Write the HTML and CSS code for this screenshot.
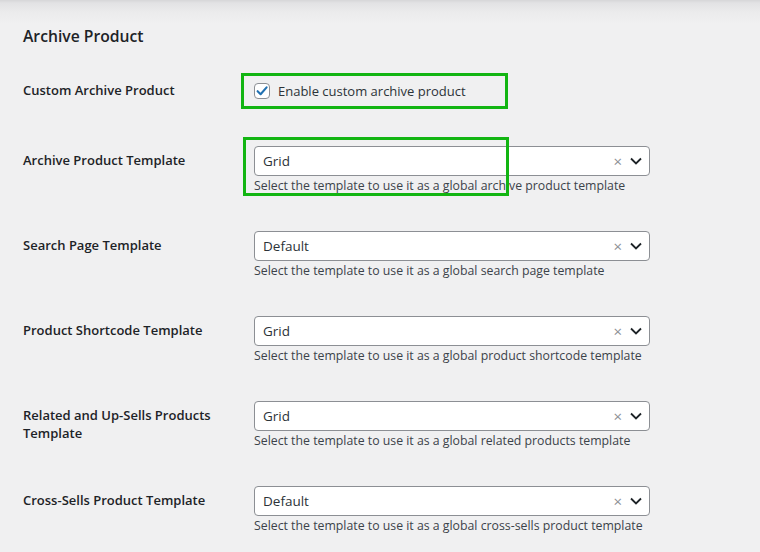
FILE: index.html
```html
<!DOCTYPE html>
<html lang="en">
<head>
<meta charset="utf-8">
<title>Archive Product</title>
<link rel="stylesheet" href="styles.css">
</head>
<body>
<div class="page">
  <h2 class="title">Archive Product</h2>
  <div class="form">
    <div class="row row-check">
      <div class="label">Custom Archive Product</div>
      <div class="field">
        <label class="check">
          <span class="box"><svg viewBox="0 0 16 16" width="16" height="16"><path d="M3.6 8.2 L6.6 11.2 L12.6 4.4" fill="none" stroke="#2271b1" stroke-width="2.1" stroke-linecap="round" stroke-linejoin="round"/></svg></span>
          <span>Enable custom archive product</span>
        </label>
        <span class="highlight hl-check"></span>
      </div>
    </div>

    <div class="row">
      <div class="label">Archive Product Template</div>
      <div class="field">
        <div class="select"><span class="value">Grid</span><span class="clear">×</span><svg class="chev" viewBox="0 0 12 8" width="12" height="8"><path d="M1 1.5 L6 6.5 L11 1.5" fill="none" stroke="#1d2327" stroke-width="1.8"/></svg></div>
        <p class="desc">Select the template to use it as a global archive product template</p>
        <span class="highlight hl-select"></span>
      </div>
    </div>

    <div class="row">
      <div class="label">Search Page Template</div>
      <div class="field">
        <div class="select"><span class="value">Default</span><span class="clear">×</span><svg class="chev" viewBox="0 0 12 8" width="12" height="8"><path d="M1 1.5 L6 6.5 L11 1.5" fill="none" stroke="#1d2327" stroke-width="1.8"/></svg></div>
        <p class="desc">Select the template to use it as a global search page template</p>
      </div>
    </div>

    <div class="row">
      <div class="label">Product Shortcode Template</div>
      <div class="field">
        <div class="select"><span class="value">Grid</span><span class="clear">×</span><svg class="chev" viewBox="0 0 12 8" width="12" height="8"><path d="M1 1.5 L6 6.5 L11 1.5" fill="none" stroke="#1d2327" stroke-width="1.8"/></svg></div>
        <p class="desc">Select the template to use it as a global product shortcode template</p>
      </div>
    </div>

    <div class="row">
      <div class="label">Related and Up-Sells Products Template</div>
      <div class="field">
        <div class="select"><span class="value">Grid</span><span class="clear">×</span><svg class="chev" viewBox="0 0 12 8" width="12" height="8"><path d="M1 1.5 L6 6.5 L11 1.5" fill="none" stroke="#1d2327" stroke-width="1.8"/></svg></div>
        <p class="desc">Select the template to use it as a global related products template</p>
      </div>
    </div>

    <div class="row">
      <div class="label">Cross-Sells Product Template</div>
      <div class="field">
        <div class="select"><span class="value">Default</span><span class="clear">×</span><svg class="chev" viewBox="0 0 12 8" width="12" height="8"><path d="M1 1.5 L6 6.5 L11 1.5" fill="none" stroke="#1d2327" stroke-width="1.8"/></svg></div>
        <p class="desc">Select the template to use it as a global cross-sells product template</p>
      </div>
    </div>
  </div>
</div>
</body>
</html>
```

FILE: styles.css
```css
html, body {
  margin: 0;
  padding: 0;
}
body {
  background: linear-gradient(to bottom, #d6d6d8 0, #e2e2e4 3px, #ebebec 12px, #f0f0f1 24px) no-repeat, #f0f0f1;
  background-size: 100% 24px, auto;
  font-family: "Open Sans", "Noto Sans", sans-serif;
  color: #1d2327;
  height: 552px;
  overflow: hidden;
}
.page {
  padding: 24px 0 0 23px;
}
.title {
  margin: 0 0 25px;
  font-size: 15.7px;
  line-height: 24px;
  font-weight: 600;
  color: #1d2327;
}
.form {
  display: flex;
  flex-direction: column;
  gap: 36px;
}
.row {
  display: grid;
  grid-template-columns: 231px 396px;
  align-items: start;
}
.row + .row {
  margin-top: 1px;
}
.label {
  font-size: 13px;
  font-weight: 600;
  line-height: 18px;
  padding-top: 5px;
  width: 200px;
  color: #1d2327;
}
.field {
  position: relative;
}
.row-check {
  height: 36px;
  align-items: stretch;
}
.row-check .label {
  padding-top: 0;
  align-self: center;
  margin-top: -2px;
}
.row-check .field {
  display: flex;
  align-items: center;
}
.check {
  display: flex;
  align-items: center;
  gap: 8px;
  font-size: 13px;
  color: #2c3338;
}
.box {
  width: 16px;
  height: 16px;
  box-sizing: border-box;
  border: 1px solid #8c8f94;
  border-radius: 4px;
  background: #fff;
  display: flex;
}
.box svg {
  margin: -1px;
}
.select {
  height: 30px;
  box-sizing: border-box;
  border: 1px solid #8c8f94;
  border-radius: 4px;
  background: #fff;
  display: flex;
  align-items: center;
  padding: 0 7px 0 8px;
  font-size: 13.5px;
  color: #2c3338;
}
.value {
  flex: 1;
}
.clear {
  color: #8c8f94;
  font-size: 15px;
  margin-right: 8px;
  line-height: 1;
}
.chev {
  display: block;
}
.desc {
  margin: 1px 0 0;
  font-size: 12.3px;
  line-height: 17px;
  color: #3c434a;
}
.highlight {
  position: absolute;
  border: 3px solid #12b512;
  box-sizing: border-box;
  pointer-events: none;
}
.hl-check {
  left: -13px;
  top: 0;
  width: 267px;
  height: 36px;
}
.hl-select {
  left: -11px;
  top: -9px;
  width: 266px;
  height: 59px;
}
```
